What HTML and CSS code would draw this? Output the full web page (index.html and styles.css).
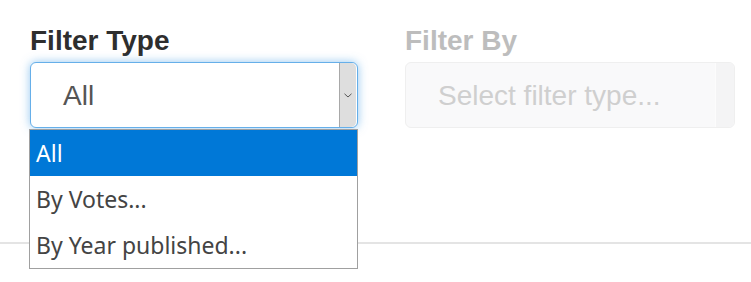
FILE: index.html
```html
<!DOCTYPE html>
<html>
<head>
<meta charset="utf-8">
<link rel="stylesheet" href="styles.css">
</head>
<body>
<div class="page">
  <div class="row">
    <div class="field field-type">
      <div class="label">Filter Type</div>
      <div class="select focused">
        <span class="value">All</span>
        <span class="arrow">
          <svg width="8" height="5" viewBox="0 0 8 5"><path d="M0.5 0.8 L4 4 L7.5 0.8" fill="none" stroke="#555" stroke-width="1"/></svg>
        </span>
      </div>
      <ul class="dropdown">
        <li class="opt selected">All</li>
        <li class="opt">By Votes...</li>
        <li class="opt">By Year published...</li>
      </ul>
    </div>
    <div class="field field-by">
      <div class="label disabled">Filter By</div>
      <div class="select disabled">
        <span class="value placeholder">Select filter type...</span>
        <span class="arrow"></span>
      </div>
    </div>
  </div>
  <div class="divider"></div>
</div>
</body>
</html>
```
FILE: styles.css
```css
html, body {
  margin: 0;
  padding: 0;
  background: #fff;
}
.page {
  width: 751px;
  height: 282px;
  overflow: hidden;
}
.row {
  display: flex;
  gap: 47px;
  padding: 26px 0 0 30px;
}
.field {
  position: relative;
  display: flex;
  flex-direction: column;
}
.field-type { width: 328px; }
.field-by { width: 330px; }
.label {
  font-family: "Liberation Sans", Arial, sans-serif;
  font-weight: bold;
  font-size: 28px;
  line-height: 30px;
  color: #2e2e2e;
  margin-bottom: 6px;
}
.label.disabled { color: #bdbdbd; }
.select {
  box-sizing: border-box;
  height: 66px;
  border-radius: 6px;
  display: flex;
  align-items: center;
  font-family: "Liberation Sans", Arial, sans-serif;
  font-size: 28px;
  color: #555;
  overflow: hidden;
}
.select.focused {
  border: 1px solid #66afe9;
  box-shadow: 0 0 10px rgba(102, 175, 233, 0.7);
  background: #fff;
}
.select.disabled {
  border: 1px solid #efefef;
  background: #f9f9fa;
}
.value {
  flex: 1;
  padding-left: 32px;
  padding-top: 2px;
}
.placeholder { color: #cfcfcf; }
.arrow {
  align-self: stretch;
  width: 16px;
  display: flex;
  align-items: center;
  justify-content: center;
}
.focused .arrow {
  background: #dedede;
  border-left: 1px solid #a8a8a8;
  margin-right: 1px;
  border-radius: 0 5px 5px 0;
}
.disabled .arrow {
  width: 18px;
  background: #f4f4f5;
  border-left: 1px solid #fcfcfc;
}
.dropdown {
  position: absolute;
  top: 103px;
  left: -1px;
  width: 327px;
  margin: 0;
  padding: 0;
  list-style: none;
  border: 1px solid #a0a0a0;
  background: #fff;
  z-index: 2;
}
.opt {
  height: 46px;
  line-height: 46px;
  padding-left: 6px;
  font-family: "Noto Sans", "Open Sans", sans-serif;
  font-size: 23px;
  color: #444;
}
.opt.selected {
  background: #0078d7;
  color: #fff;
}
.divider {
  margin-top: 114px;
  border-top: 2px solid #e4e4e4;
}
```
